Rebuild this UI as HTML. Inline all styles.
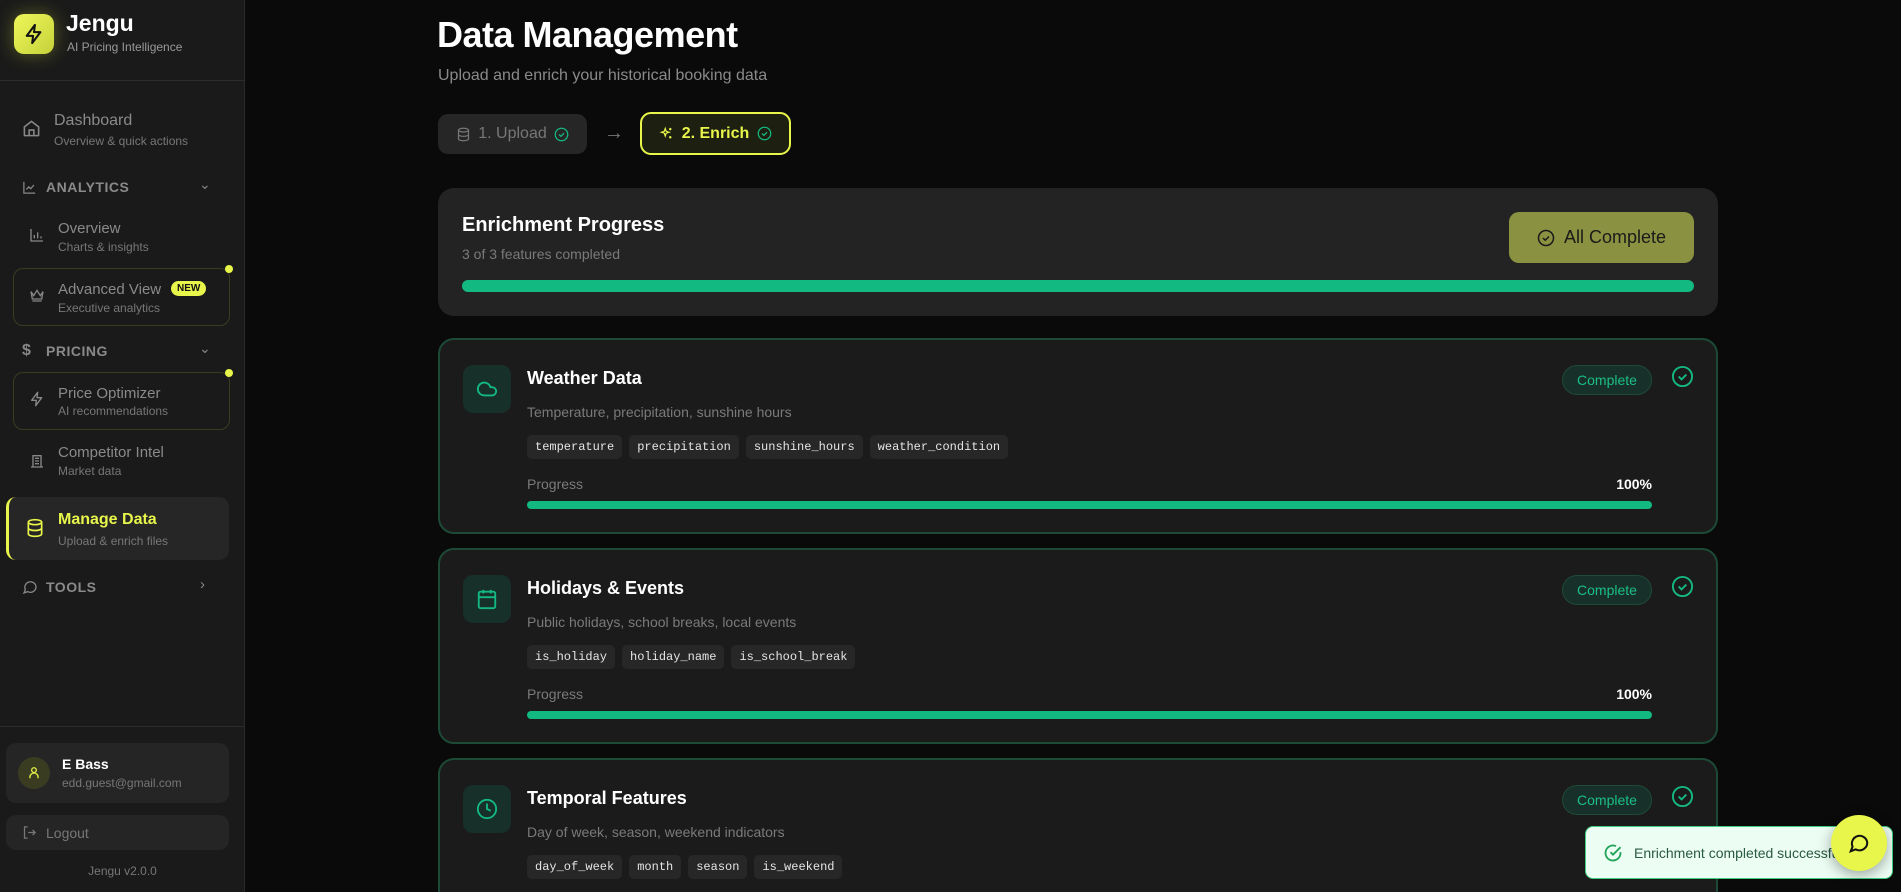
<!DOCTYPE html>
<html><head><meta charset="utf-8"><style>
*{box-sizing:border-box;margin:0;padding:0}
html,body{width:1901px;height:892px;overflow:hidden;background:#0a0a0a}
body{font-family:"Liberation Sans",sans-serif;position:relative;color:#fff}
#root{position:absolute;left:0;top:0;width:1901px;height:892px;overflow:hidden}
.abs{position:absolute}
.sb{left:0;top:0;width:245px;height:892px;background:#1a1a1a;border-right:1px solid #2a2a2a}
.nt{color:#8a8a8a;font-size:15px}
.ns{color:#777;font-size:12px}
.sec{color:#8a8a8a;font-size:14px;font-weight:bold;letter-spacing:.5px}
.card{left:438px;width:1280px;height:196px;background:#1b1b1b;border:2px solid #1d4a36;border-radius:16px}
.ib{left:23px;top:25px;width:48px;height:48px;background:#17302a;border-radius:10px;display:flex;align-items:center;justify-content:center}
.ct{left:87px;top:28px;font-size:18px;font-weight:bold}
.cd{left:87px;top:64px;font-size:14px;color:#7a7a7a}
.tags{left:87px;top:95px;display:flex;gap:7px}
.tag{background:#272727;border-radius:5px;padding:5px 8px;font-family:"Liberation Mono",monospace;font-size:12px;color:#e5e5e5}
.pl{left:87px;top:136px;font-size:14px;color:#7a7a7a}
.pp{right:64px;top:136px;font-size:14px;font-weight:bold}
.bar{left:87px;right:64px;top:161px;height:8px;border-radius:4px;background:#12b981}
.badge{right:64px;top:25px;width:90px;height:30px;border:1px solid #1f4a38;background:#17302a;border-radius:15px;color:#1cbf85;font-size:14px;text-align:center;line-height:28px}
.chk{right:22px;top:25px}
</style></head><body><div id="root">
<div class="abs sb">
 <div class="abs" style="left:14px;top:14px;width:40px;height:40px;border-radius:10px;background:linear-gradient(135deg,#eef85a,#c6d13a);box-shadow:0 0 18px rgba(220,235,60,.35);display:flex;align-items:center;justify-content:center">
  <svg width="22" height="22" viewBox="0 0 24 24" fill="none" stroke="#111" stroke-width="2.2" stroke-linejoin="round"><path d="M13 2L4 14h7l-1 8 9-12h-7z"/></svg></div>
 <div class="abs" style="left:66px;top:10px;font-size:23px;font-weight:bold">Jengu</div>
 <div class="abs" style="left:67px;top:40px;font-size:12px;color:#999">AI Pricing Intelligence</div>
 <div class="abs" style="left:0;top:80px;width:245px;height:1px;background:#2c2c2c"></div>

 <svg class="abs" style="left:22px;top:119px" width="19" height="19" viewBox="0 0 24 24" fill="none" stroke="#888" stroke-width="2"><path d="M3 10l9-7 9 7v10a1 1 0 01-1 1H4a1 1 0 01-1-1z"/><path d="M9 21v-7h6v7"/></svg>
 <div class="abs nt" style="left:54px;top:112px;font-size:16px">Dashboard</div>
 <div class="abs ns" style="left:54px;top:134px">Overview &amp; quick actions</div>

 <svg class="abs" style="left:22px;top:180px" width="15" height="15" viewBox="0 0 24 24" fill="none" stroke="#888" stroke-width="2"><path d="M3 3v18h18"/><path d="M7 15l4-4 3 3 5-6"/></svg>
 <div class="abs sec" style="left:46px;top:179px">ANALYTICS</div>
 <div class="abs" style="left:199px;top:176px;color:#888;font-size:14px">&#8964;</div>

 <svg class="abs" style="left:29px;top:227px" width="16" height="16" viewBox="0 0 24 24" fill="none" stroke="#888" stroke-width="2"><path d="M3 3v18h18M8 17v-5M13 17V8M18 17v-3"/></svg>
 <div class="abs nt" style="left:58px;top:220px">Overview</div>
 <div class="abs ns" style="left:58px;top:240px">Charts &amp; insights</div>

 <div class="abs" style="left:13px;top:268px;width:217px;height:58px;border:1px solid #3a3d20;border-radius:10px"></div>
 <div class="abs" style="left:225px;top:265px;width:8px;height:8px;border-radius:50%;background:#e8f54a"></div>
 <svg class="abs" style="left:29px;top:287px" width="16" height="16" viewBox="0 0 24 24" fill="none" stroke="#888" stroke-width="2"><path d="M3 7l4 6 5-8 5 8 4-6-2 11H5zM5 21h14"/></svg>
 <div class="abs nt" style="left:58px;top:281px">Advanced View</div>
 <div class="abs" style="left:171px;top:281px;background:#e8f54a;color:#111;font-size:10px;font-weight:bold;padding:2px 6px;border-radius:8px">NEW</div>
 <div class="abs ns" style="left:58px;top:301px">Executive analytics</div>

 <div class="abs" style="left:22px;top:342px;color:#888;font-size:16px;font-weight:bold">$</div>
 <div class="abs sec" style="left:46px;top:343px">PRICING</div>
 <div class="abs" style="left:199px;top:340px;color:#888;font-size:14px">&#8964;</div>

 <div class="abs" style="left:13px;top:372px;width:217px;height:58px;border:1px solid #3a3d20;border-radius:10px"></div>
 <div class="abs" style="left:225px;top:369px;width:8px;height:8px;border-radius:50%;background:#e8f54a"></div>
 <svg class="abs" style="left:29px;top:391px" width="16" height="16" viewBox="0 0 24 24" fill="none" stroke="#888" stroke-width="2" stroke-linejoin="round"><path d="M13 2L4 14h7l-1 8 9-12h-7z"/></svg>
 <div class="abs nt" style="left:58px;top:385px">Price Optimizer</div>
 <div class="abs ns" style="left:58px;top:404px">AI recommendations</div>

 <svg class="abs" style="left:29px;top:453px" width="16" height="16" viewBox="0 0 24 24" fill="none" stroke="#888" stroke-width="2"><path d="M6 21V4h12v17M3 21h18M9 8h6M9 12h6M9 16h6"/></svg>
 <div class="abs nt" style="left:58px;top:444px">Competitor Intel</div>
 <div class="abs ns" style="left:58px;top:464px">Market data</div>

 <div class="abs" style="left:6px;top:497px;width:223px;height:63px;border-radius:10px;background:#262626;border-left:3px solid #e8f54a"></div>
 <svg class="abs" style="left:25px;top:518px" width="20" height="20" viewBox="0 0 24 24" fill="none" stroke="#e8f54a" stroke-width="2"><ellipse cx="12" cy="5" rx="8" ry="3"/><path d="M4 5v14c0 1.7 3.6 3 8 3s8-1.3 8-3V5M4 12c0 1.7 3.6 3 8 3s8-1.3 8-3"/></svg>
 <div class="abs" style="left:58px;top:511px;font-size:16px;font-weight:bold;color:#e8f54a">Manage Data</div>
 <div class="abs ns" style="left:58px;top:534px">Upload &amp; enrich files</div>

 <svg class="abs" style="left:22px;top:579px" width="16" height="16" viewBox="0 0 24 24" fill="none" stroke="#888" stroke-width="2"><path d="M21 11.5a8.4 8.4 0 01-12.5 7.4L3 21l2-5A8.4 8.4 0 1121 11.5z"/></svg>
 <div class="abs sec" style="left:46px;top:579px">TOOLS</div>
 <div class="abs" style="left:200px;top:576px;color:#888;font-size:15px">&#8250;</div>

 <div class="abs" style="left:0;top:726px;width:245px;height:1px;background:#2c2c2c"></div>
 <div class="abs" style="left:6px;top:743px;width:223px;height:60px;border-radius:10px;background:#252525"></div>
 <div class="abs" style="left:18px;top:757px;width:32px;height:32px;border-radius:50%;background:#3a3c22;display:flex;align-items:center;justify-content:center"><svg width="14" height="14" viewBox="0 0 24 24" fill="none" stroke="#e8f54a" stroke-width="2.2"><circle cx="12" cy="7" r="4"/><path d="M5 21v-2a7 7 0 0114 0v2"/></svg></div>
 <div class="abs" style="left:62px;top:756px;font-size:14px;font-weight:bold">E Bass</div>
 <div class="abs ns" style="left:62px;top:776px;font-size:12px">edd.guest@gmail.com</div>
 <div class="abs" style="left:6px;top:815px;width:223px;height:35px;border-radius:10px;background:#252525"></div>
 <svg class="abs" style="left:22px;top:825px" width="15" height="15" viewBox="0 0 24 24" fill="none" stroke="#777" stroke-width="2"><path d="M9 3H4v18h5M10 12h11M17 8l4 4-4 4"/></svg>
 <div class="abs" style="left:46px;top:825px;font-size:14px;color:#777">Logout</div>
 <div class="abs" style="left:0;width:245px;text-align:center;top:864px;font-size:12px;color:#777">Jengu v2.0.0</div>
</div>

<div class="abs" style="left:437px;top:14px;font-size:36px;font-weight:bold;letter-spacing:-.5px">Data Management</div>
<div class="abs" style="left:438px;top:67px;font-size:16px;color:#8a8a8a">Upload and enrich your historical booking data</div>

<div class="abs" style="left:438px;top:114px;width:149px;height:40px;border-radius:10px;background:#262626;display:flex;align-items:center;justify-content:center;gap:7px;color:#777;font-size:16px">
 <svg width="15" height="15" viewBox="0 0 24 24" fill="none" stroke="#777" stroke-width="2"><ellipse cx="12" cy="5" rx="8" ry="3"/><path d="M4 5v14c0 1.7 3.6 3 8 3s8-1.3 8-3V5M4 12c0 1.7 3.6 3 8 3s8-1.3 8-3"/></svg>1. Upload
 <svg width="15" height="15" viewBox="0 0 24 24" fill="none" stroke="#14b981" stroke-width="2"><circle cx="12" cy="12" r="10"/><path d="M8 12l3 3 5-5"/></svg></div>
<div class="abs" style="left:604px;top:122px;color:#777;font-size:20px">&#8594;</div>
<div class="abs" style="left:640px;top:112px;width:151px;height:43px;border-radius:11px;background:#1d1f10;border:2px solid #e8f54a;display:flex;align-items:center;justify-content:center;gap:8px;color:#e8f54a;font-size:16px;font-weight:bold">
 <svg width="15" height="15" viewBox="0 0 24 24" fill="none" stroke="#e8f54a" stroke-width="2"><path d="M10 4l1.5 4.5L16 10l-4.5 1.5L10 16l-1.5-4.5L4 10l4.5-1.5zM18 3v4M16 5h4M18 16v4M16 18h4"/></svg>2. Enrich
 <svg width="15" height="15" viewBox="0 0 24 24" fill="none" stroke="#14b981" stroke-width="2"><circle cx="12" cy="12" r="10"/><path d="M8 12l3 3 5-5"/></svg></div>

<div class="abs" style="left:438px;top:188px;width:1280px;height:128px;background:#232323;border-radius:16px">
 <div class="abs" style="left:24px;top:26px;font-size:20px;font-weight:bold">Enrichment Progress</div>
 <div class="abs" style="left:24px;top:58px;font-size:14px;color:#7a7a7a">3 of 3 features completed</div>
 <div class="abs" style="left:24px;right:24px;top:92px;height:12px;border-radius:6px;background:#12b981"></div>
 <div class="abs" style="right:24px;top:24px;width:185px;height:51px;border-radius:10px;background:#8a9140;display:flex;align-items:center;justify-content:center;gap:9px;color:#1a1a1a;font-size:18px">
  <svg width="18" height="18" viewBox="0 0 24 24" fill="none" stroke="#1a1a1a" stroke-width="2"><circle cx="12" cy="12" r="10"/><path d="M8 12l3 3 5-5"/></svg>All Complete</div>
</div>

<div class="abs card" style="top:338px">
 <div class="abs ib"><svg width="22" height="22" viewBox="0 0 24 24" fill="none" stroke="#14b981" stroke-width="2"><path d="M17.5 19H9a7 7 0 116.7-9h1.8a4.5 4.5 0 010 9z"/></svg></div>
 <div class="abs ct">Weather Data</div><div class="abs cd">Temperature, precipitation, sunshine hours</div>
 <div class="abs tags"><span class="tag">temperature</span><span class="tag">precipitation</span><span class="tag">sunshine_hours</span><span class="tag">weather_condition</span></div>
 <div class="abs pl">Progress</div><div class="abs pp">100%</div><div class="abs bar"></div>
 <div class="abs badge">Complete</div>
 <svg class="abs chk" width="23" height="23" viewBox="0 0 24 24" fill="none" stroke="#14b981" stroke-width="2"><circle cx="12" cy="12" r="10"/><path d="M8 12l3 3 5-5"/></svg>
</div>
<div class="abs card" style="top:548px">
 <div class="abs ib"><svg width="22" height="22" viewBox="0 0 24 24" fill="none" stroke="#14b981" stroke-width="2"><rect x="3" y="4" width="18" height="18" rx="2"/><path d="M16 2v4M8 2v4M3 10h18"/></svg></div>
 <div class="abs ct">Holidays &amp; Events</div><div class="abs cd">Public holidays, school breaks, local events</div>
 <div class="abs tags"><span class="tag">is_holiday</span><span class="tag">holiday_name</span><span class="tag">is_school_break</span></div>
 <div class="abs pl">Progress</div><div class="abs pp">100%</div><div class="abs bar"></div>
 <div class="abs badge">Complete</div>
 <svg class="abs chk" width="23" height="23" viewBox="0 0 24 24" fill="none" stroke="#14b981" stroke-width="2"><circle cx="12" cy="12" r="10"/><path d="M8 12l3 3 5-5"/></svg>
</div>
<div class="abs card" style="top:758px;height:134px;border-bottom:none;border-radius:16px 16px 0 0">
 <div class="abs ib"><svg width="22" height="22" viewBox="0 0 24 24" fill="none" stroke="#14b981" stroke-width="2"><circle cx="12" cy="12" r="10"/><path d="M12 6v6l4 2"/></svg></div>
 <div class="abs ct">Temporal Features</div><div class="abs cd">Day of week, season, weekend indicators</div>
 <div class="abs tags"><span class="tag">day_of_week</span><span class="tag">month</span><span class="tag">season</span><span class="tag">is_weekend</span></div>
 <div class="abs badge">Complete</div>
 <svg class="abs chk" width="23" height="23" viewBox="0 0 24 24" fill="none" stroke="#14b981" stroke-width="2"><circle cx="12" cy="12" r="10"/><path d="M8 12l3 3 5-5"/></svg>
</div>

<div class="abs" style="left:1585px;top:826px;width:308px;height:53px;border-radius:8px;background:#ecfdf3;border:1px solid #3fcf7f;overflow:hidden">
 <svg class="abs" style="left:17px;top:16px" width="20" height="20" viewBox="0 0 24 24" fill="none" stroke="#22a55a" stroke-width="2.2"><path d="M21 11v1a9 9 0 11-5.3-8.2"/><path d="M9 11l3 3 9-9"/></svg>
 <div class="abs" style="left:48px;top:18px;font-size:14px;color:#2a5a40;white-space:nowrap">Enrichment completed successfully</div>
</div>
<div class="abs" style="left:1831px;top:815px;width:56px;height:56px;border-radius:50%;background:#e8f54a;box-shadow:0 4px 14px rgba(0,0,0,.35);display:flex;align-items:center;justify-content:center">
 <svg width="22" height="22" viewBox="0 0 24 24" fill="none" stroke="#111" stroke-width="2.2"><path d="M21 11.5a8.4 8.4 0 01-12.5 7.4L3 21l2-5A8.4 8.4 0 1121 11.5z"/></svg></div>
</div></body></html>
